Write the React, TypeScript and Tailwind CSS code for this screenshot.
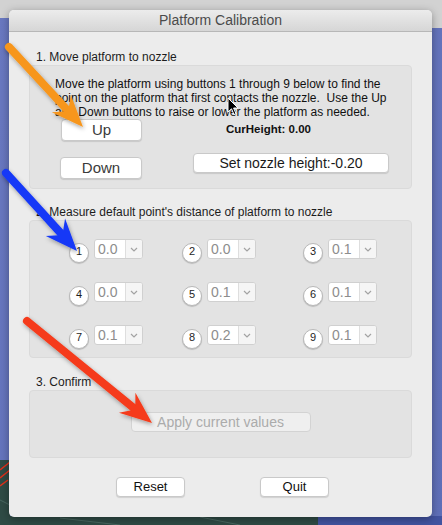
import React from 'react';

type Pt = [number, number];

const Arrow = ({ tail, tip, color }: { tail: Pt; tip: Pt; color: string }) => {
  const dx = tip[0] - tail[0];
  const dy = tip[1] - tail[1];
  const len = Math.hypot(dx, dy);
  const ux = dx / len;
  const uy = dy / len;
  const nx = -uy;
  const ny = ux;
  const L = 27;
  const H = 13;
  const bx = tip[0] - ux * L;
  const by = tip[1] - uy * L;
  const wx = bx - ux * 5;
  const wy = by - uy * 5;
  const head = [
    [tip[0], tip[1]],
    [wx + nx * H, wy + ny * H],
    [bx + ux * 3 + nx * 3, by + uy * 3 + ny * 3],
    [bx + ux * 3 - nx * 3, by + uy * 3 - ny * 3],
    [wx - nx * H, wy - ny * H],
  ]
    .map((p) => p.join(','))
    .join(' ');
  return (
    <g filter="url(#shadow)">
      <line x1={tail[0]} y1={tail[1]} x2={bx + ux * 4} y2={by + uy * 4} stroke={color} strokeWidth={8} strokeLinecap="round" />
      <polygon points={head} fill={color} />
    </g>
  );
};

const PushButton = ({ label, className }: { label: string; className: string }) => (
  <div
    className={`flex items-center justify-center rounded-[4px] border border-[#c9c9c9] bg-white shadow-[0_1px_1px_rgba(0,0,0,0.12)] ${className}`}
  >
    {label}
  </div>
);

const Combo = ({ value }: { value: string }) => (
  <div className="flex h-[20px] w-[49px] overflow-hidden rounded-[3px] border border-[#d0d0d0] bg-white">
    <div className="flex-1 pl-[3px] text-[14px] leading-[18px] text-[#8d8d8d]">{value}</div>
    <div className="flex w-[17px] items-center justify-center border-l border-[#dedede] bg-[#f5f5f5]">
      <svg width="8" height="5" viewBox="0 0 8 5">
        <path d="M1 1l3 3 3-3" fill="none" stroke="#a3a3a3" strokeWidth="1.2" />
      </svg>
    </div>
  </div>
);

const Point = ({ n, value, className }: { n: number; value: string; className?: string }) => (
  <div className={`flex items-start gap-[5px] ${className ?? ''}`}>
    <div className="mt-[4px] flex h-[20px] w-[20px] items-center justify-center rounded-full border border-[#b8b8b8] bg-white shadow-[0_1px_1px_rgba(0,0,0,0.18)]">
      <span className="-mt-[3px] text-[11px] leading-none text-[#1e1e1e]">{n}</span>
    </div>
    <Combo value={value} />
  </div>
);

const rows: string[][] = [
  ['0.0', '0.0', '0.1'],
  ['0.0', '0.1', '0.1'],
  ['0.1', '0.2', '0.1'],
];

export default function App() {
  return (
    <div className="relative h-[525px] w-[442px] overflow-hidden pt-[10px] font-['Liberation_Sans',Arial,sans-serif]">
      <svg className="absolute inset-0" width="442" height="525" viewBox="0 0 442 525">
        <defs>
          <linearGradient id="desk" x1="0" y1="0" x2="1" y2="1">
            <stop offset="0" stopColor="#6a79c1" />
            <stop offset="1" stopColor="#5f6fb8" />
          </linearGradient>
        </defs>
        <rect width="442" height="525" fill="url(#desk)" />
        <rect width="442" height="18" fill="#d2d2d2" />
        <rect x="428" width="14" height="28" fill="#d2d2d2" />
        <rect x="0" y="460" width="10" height="65" fill="#2f4b45" />
        <rect x="0" y="516" width="318" height="9" fill="#2f4b45" />
        <rect x="318" y="516" width="124" height="9" fill="#4253a0" />
        <path d="M0 470 L10 462 M0 478 L10 470 M0 486 L8 480" stroke="#e0301a" strokeWidth="1.5" />
        <path d="M0 500 L10 505 M60 518 L120 525 M200 517 L240 525" stroke="#4a6861" strokeWidth="1" />
      </svg>

      <div className="relative ml-[9px] h-[507px] w-[423px] overflow-hidden rounded-[5px] bg-[#ececec] shadow-[0_2px_8px_rgba(0,0,0,0.35)]">
        <div className="h-[22px] border-b border-[#b7b7b7] bg-gradient-to-b from-[#ececec] to-[#d6d6d6] text-center text-[14px] leading-[21px] text-[#4b4b4b]">
          Platform Calibration
        </div>

        <div className="px-[20px] pt-[18px] text-[#1c1c1c]">
          <div className="h-[15px] pl-[7px] text-[12px] leading-[15px]">1. Move platform to nozzle</div>
          <div className="h-[124px] rounded-[4px] border border-[#dadada] bg-[#e3e3e3]">
            <div className="pl-[25px] pt-[11px] text-[12px] leading-[14px] text-[#111]">
              Move the platform using buttons 1 through 9 below to find the
              <br />
              point on the platform that first contacts the nozzle.&nbsp; Use the Up
              <br />
              and Down buttons to raise or lower the platform as needed.
            </div>
            <div className="flex items-center">
              <PushButton label="Up" className="ml-[31px] h-[22px] w-[81px] text-[15px] text-[#3a3a3a]" />
              <div className="ml-[84px] text-[11.5px] font-bold text-[#111]">CurHeight: 0.00</div>
            </div>
            <div className="mt-[12px] flex items-start">
              <PushButton label="Down" className="ml-[30px] mt-[4px] h-[22px] w-[82px] text-[15px] text-[#3a3a3a]" />
              <PushButton label="Set nozzle height:-0.20" className="ml-[51px] h-[20px] w-[196px] text-[14px] text-[#1a1a1a]" />
            </div>
          </div>

          <div className="mt-[16px] h-[15px] pl-[7px] text-[12px] leading-[15px]">
            2. Measure default point's distance of platform to nozzle
          </div>
          <div className="flex h-[138px] flex-col gap-[19px] rounded-[4px] border border-[#dadada] bg-[#e3e3e3] pt-[18px]">
            {rows.map((r, i) => (
              <div key={i} className="flex">
                <Point n={i * 3 + 1} value={r[0]} className="ml-[39px]" />
                <Point n={i * 3 + 2} value={r[1]} className="ml-[39px]" />
                <Point n={i * 3 + 3} value={r[2]} className="ml-[47px]" />
              </div>
            ))}
          </div>

          <div className="mt-[17px] h-[15px] pl-[7px] text-[12px] leading-[15px]">3. Confirm</div>
          <div className="h-[68px] rounded-[4px] border border-[#dadada] bg-[#e3e3e3] pt-[21px]">
            <div className="mx-auto flex h-[20px] w-[180px] items-center justify-center rounded-[4px] border border-[#d3d3d3] bg-[#efefef] text-[14px] text-[#ababab]">
              Apply current values
            </div>
          </div>
        </div>

        <div className="mt-[19px] flex">
          <PushButton label="Reset" className="ml-[107px] h-[20px] w-[69px] text-[13px] text-[#111]" />
          <PushButton label="Quit" className="ml-[75px] h-[20px] w-[69px] text-[13px] text-[#111]" />
        </div>
      </div>

      <svg className="pointer-events-none absolute inset-0" width="442" height="525" viewBox="0 0 442 525">
        <defs>
          <filter id="shadow" x="-20%" y="-20%" width="140%" height="140%">
            <feDropShadow dx="1" dy="2" stdDeviation="2" floodColor="#000" floodOpacity="0.35" />
          </filter>
        </defs>
        <Arrow tail={[9, 47]} tip={[83, 127]} color="#f7961c" />
        <Arrow tail={[6, 173]} tip={[77, 251]} color="#1438f7" />
        <Arrow tail={[27, 321]} tip={[152, 423]} color="#f53a1a" />
        <path
          d="M228 98 L228 112 L231.5 108.8 L234 114.5 L236 113.6 L233.6 108 L238 108 Z"
          fill="#000"
          stroke="#fff"
          strokeWidth="1"
        />
      </svg>
    </div>
  );
}
